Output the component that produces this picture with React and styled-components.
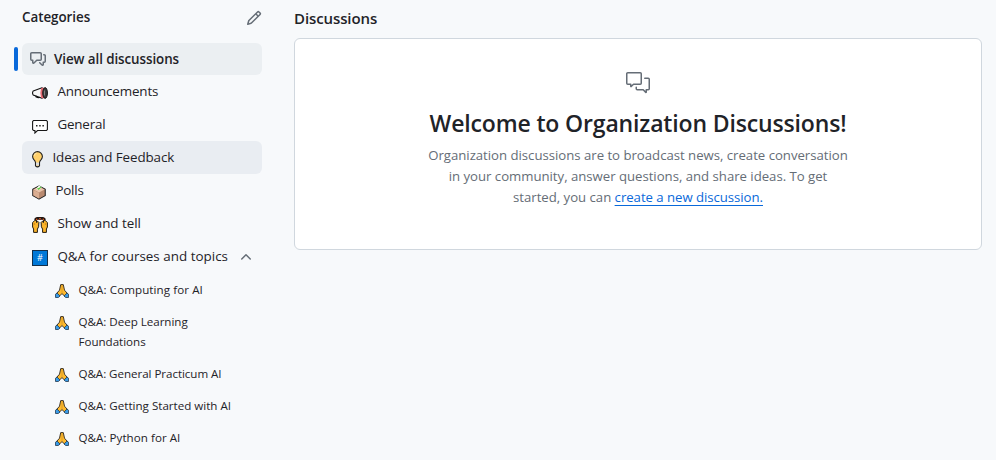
import React from "react";
import styled, { createGlobalStyle } from "styled-components";

const GlobalStyle = createGlobalStyle`
  * { box-sizing: border-box; }
  body {
    margin: 0;
    background: #f7f9fb;
    color: #1f2328;
    font-family: "Open Sans", sans-serif;
  }
  svg { display: block; flex: none; }
  h1, h2, h3, p, ul { margin: 0; padding: 0; }
`;

const Page = styled.div`
  display: grid;
  grid-template-columns: 240px 688px;
  column-gap: 32px;
  height: 460px;
  padding-left: 22px;
  overflow: hidden;
`;

const Sidebar = styled.nav`
  display: flex;
  flex-direction: column;
`;

const SidebarHeader = styled.header`
  display: flex;
  align-items: center;
  justify-content: space-between;
  height: 36px;
  margin-bottom: 7px;
  color: #656d76;
`;

const SidebarTitle = styled.h2`
  font-size: 13.4px;
  font-weight: 600;
  line-height: 20px;
  letter-spacing: -0.05px;
  color: #1f2328;
  margin-top: -2px;
`;

const List = styled.ul`
  list-style: none;
`;

const Category = styled.li`
  position: relative;
  display: flex;
  align-items: center;
  height: ${(p) => (p.$current ? 32 : 33)}px;
  padding-left: ${(p) => (p.$current ? 8 : 10)}px;
  border-radius: 6px;
  background: ${(p) => (p.$current ? "#ebeff2" : p.$hovered ? "#e9edf2" : "transparent")};
  color: #656d76;
`;

const CurrentMarker = styled.span`
  position: absolute;
  left: -8px;
  top: 4px;
  width: 4px;
  height: 24px;
  border-radius: 6px;
  background: #0969da;
`;

const CategoryName = styled.span`
  margin-left: ${(p) => (p.$strong ? 8 : 9.4)}px;
  padding-bottom: ${(p) => (p.$strong ? 0 : 2)}px;
  font-size: 13.4px;
  font-weight: ${(p) => (p.$strong ? 600 : 400)};
  line-height: 20px;
  letter-spacing: ${(p) => p.$tracking || 0}px;
  color: #1f2328;
  white-space: nowrap;
`;

const Emoji = styled.span`
  display: flex;
  padding-top: 3px;
`;

const ChevronSlot = styled.span`
  display: flex;
  margin-left: 10px;
`;

const SubList = styled(List)`
  padding: 0 50px 0 33px;
  margin-top: 1px;
`;

const SubCategory = styled.li`
  display: flex;
  align-items: flex-start;
  padding: 6px 0;
`;

const SubEmoji = styled.span`
  display: flex;
  padding-top: 4px;
`;

const SubName = styled.span`
  margin-left: 9.5px;
  width: 154px;
  font-size: 11.6px;
  line-height: 20px;
  letter-spacing: ${(p) => p.$tracking || 0}px;
`;

const Line = styled.span`
  display: block;
  white-space: nowrap;
`;

const Main = styled.main`
  display: flex;
  flex-direction: column;
`;

const MainTitle = styled.h1`
  height: 38px;
  padding-top: 6px;
  font-size: 15px;
  font-weight: 600;
  line-height: 24px;
  letter-spacing: -0.1px;
`;

const Blankslate = styled.section`
  display: flex;
  flex-direction: column;
  align-items: center;
  height: 212px;
  padding-top: 32px;
  border: 1px solid #d0d7de;
  border-radius: 6px;
  background: #fff;
  color: #656d76;
  text-align: center;
`;

const BlankslateTitle = styled.h2`
  margin-top: 10px;
  font-size: 23px;
  font-weight: 600;
  line-height: 36px;
  letter-spacing: -0.15px;
  color: #1f2328;
`;

const BlankslateText = styled.p`
  margin-top: 4px;
  font-size: 13.2px;
  line-height: 21px;
  letter-spacing: -0.02px;
`;

const Link = styled.a`
  color: #0969da;
  letter-spacing: -0.04px;
  text-decoration: underline;
  text-underline-offset: 3px;
  text-decoration-thickness: 1px;
  text-decoration-skip-ink: none;
`;

const DiscussionIcon = () => (
  <svg width="16" height="16" viewBox="0 0 16 16" fill="currentColor">
    <path d="M1.75 1h8.5c.966 0 1.75.784 1.75 1.75v5.5A1.75 1.75 0 0 1 10.25 10H7.061l-2.574 2.573A1.458 1.458 0 0 1 2 11.543V10h-.25A1.75 1.75 0 0 1 0 8.25v-5.5C0 1.784.784 1 1.75 1ZM1.5 2.75v5.5c0 .138.112.25.25.25h1a.75.75 0 0 1 .75.75v2.19l2.72-2.72a.749.749 0 0 1 .53-.22h3.5a.25.25 0 0 0 .25-.25v-5.5a.25.25 0 0 0-.25-.25h-8.5a.25.25 0 0 0-.25.25Zm13 2a.25.25 0 0 0-.25-.25h-.5a.75.75 0 0 1 0-1.5h.5c.966 0 1.75.784 1.75 1.75v5.5A1.75 1.75 0 0 1 14.25 12H14v1.543a1.458 1.458 0 0 1-2.487 1.03L9.22 12.28a.749.749 0 0 1 .326-1.275.749.749 0 0 1 .734.215l2.22 2.22v-2.19a.75.75 0 0 1 .75-.75h1a.25.25 0 0 0 .25-.25Z" />
  </svg>
);

const LargeDiscussionIcon = () => (
  <svg width="24" height="24" viewBox="0 0 24 24" fill="none" stroke="currentColor" strokeWidth="1.5" strokeLinejoin="round" strokeLinecap="round">
    <path d="M1.75 1.75h12.5a1 1 0 0 1 1 1v9.5a1 1 0 0 1-1 1H7.5l-2.3 2.3a.27.27 0 0 1-.45-.2V13.25h-3a1 1 0 0 1-1-1v-9.5a1 1 0 0 1 1-1Z" />
    <path d="M18.75 7.25h3.5a1 1 0 0 1 1 1v9.5a1 1 0 0 1-1 1h-2v2.4a.27.27 0 0 1-.45.2l-2.6-2.6H11.25a1 1 0 0 1-1-1v-1.5" />
  </svg>
);

const PencilIcon = () => (
  <svg width="16" height="16" viewBox="0 0 16 16" fill="currentColor">
    <path d="M11.013 1.427a1.75 1.75 0 0 1 2.474 0l1.086 1.086a1.75 1.75 0 0 1 0 2.474l-8.61 8.61c-.21.21-.47.364-.756.445l-3.251.93a.75.75 0 0 1-.927-.928l.929-3.25c.081-.286.235-.547.445-.758l8.61-8.61Zm.176 4.823L9.75 4.81l-6.286 6.287a.253.253 0 0 0-.064.108l-.558 1.953 1.953-.558a.253.253 0 0 0 .108-.064Zm1.238-3.763a.25.25 0 0 0-.354 0L10.811 3.75l1.439 1.44 1.263-1.263a.25.25 0 0 0 0-.354Z" />
  </svg>
);

const ChevronUpIcon = () => (
  <svg width="16" height="16" viewBox="0 0 16 16" fill="currentColor">
    <path d="M3.22 10.53a.749.749 0 0 1 0-1.06l4.25-4.25a.749.749 0 0 1 1.06 0l4.25 4.25a.749.749 0 1 1-1.06 1.06L8 6.811 4.28 10.53a.749.749 0 0 1-1.06 0Z" />
  </svg>
);

const Megaphone = () => (
  <svg width="16" height="16" viewBox="0 0 16 16">
    <path d="M1.2 6 10 2.7v10.6L1.2 10Q-.1 8 1.2 6Z" fill="#f7f7f7" stroke="#111" strokeWidth="1.1" />
    <path d="M4 10.8v1q2.3 1.5 4.2.5" fill="none" stroke="#111" strokeWidth="1.2" />
    <path d="M9 3.2 12 2.5v11L9 12.8Q7.6 8 9 3.2Z" fill="#e56a72" />
    <ellipse cx="13.1" cy="8" rx="2.3" ry="5.4" fill="#3b3b3b" stroke="#111" strokeWidth="1" />
    <path d="M12.4 5.5v5" stroke="#8a8a8a" strokeWidth="1" />
  </svg>
);

const SpeechBalloon = () => (
  <svg width="16" height="16" viewBox="0 0 16 16">
    <path d="M1.5 2.5h13l.9.9v8.2l-.9.9h-9L2.9 15v-2.5H1.5l-.9-.9V3.4Z" fill="#fff" stroke="#171717" strokeWidth="1.1" />
    <path d="M4 7h1.5v1.4H4Zm3.2 0h1.5v1.4H7.2Zm3.2 0h1.5v1.4h-1.5Z" fill="#222" />
  </svg>
);

const LightBulb = () => (
  <svg width="11" height="17" viewBox="0 0 11 17">
    <path d="M3.5 11.5Q3.3 10 1.7 8.4A5 5 0 0 1 .6 5.5a4.9 4.9 0 0 1 9.8 0 5 5 0 0 1-1.1 2.9Q7.7 10 7.5 11.5v3.3q-2 2-4 0Z" fill="#ffd06b" stroke="#222" strokeWidth="1.1" />
    <path d="M4 11.5h3v3H4Z" fill="#d8dadd" />
    <path d="M2.2 5a3.2 3.2 0 0 1 2.4-2.8" fill="none" stroke="#ffe2a0" strokeWidth="1.2" />
  </svg>
);

const BallotBox = () => (
  <svg width="14" height="16" viewBox="0 0 14.6 16">
    <path d="M7.3 1.8 13.8 5v6.8l-6.5 3.6-6.5-3.6V5Z" fill="#b98a70" stroke="#222" strokeWidth="1.1" strokeLinejoin="round" />
    <path d="M7.3 2.4 13.1 5.3 7.3 8.4 1.5 5.3Z" fill="#e8c3aa" />
    <path d="M7.3 8.7v6L1.4 11.5V5.8Z" fill="#dbae92" />
    <path d="m4.3 4.5 3-3.3L10.2 3 7 5.8Z" fill="#f5fff0" />
    <path d="m5.8 4 1.1 1 2.5-2.3" fill="none" stroke="#54c636" strokeWidth="1.2" />
  </svg>
);

const RaisingHands = () => (
  <svg width="16" height="16" viewBox="0 0 16 16">
    <path d="M3.2 3.2Q5 .6 8 1.5q3-.9 4.8 1.7" fill="none" stroke="#221511" strokeWidth="3" />
    <path d="M4 2.5h1.4M7.2 1.7h1.6M10.6 2.5H12" stroke="#d45825" strokeWidth="1.4" />
    <path d="M1.6 15.4V12L.6 10V5.7L3 3.2l1.5.3v2L6 4.4l.9.9-.3 4.5-1.2 2.3v3.3Z" fill="#fbb52c" stroke="#221b12" strokeWidth="1" strokeLinejoin="round" />
    <path d="M14.4 15.4V12l1-2V5.7L13 3.2l-1.5.3v2L10 4.4l-.9.9.3 4.5 1.2 2.3v3.3Z" fill="#fbb52c" stroke="#221b12" strokeWidth="1" strokeLinejoin="round" />
    <path d="M2.6 6v2M13.4 6v2" stroke="#d88e19" />
  </svg>
);

const HashTile = styled.span`
  display: grid;
  place-items: center;
  width: 16px;
  height: 16px;
  border: 1px solid #14304a;
  background: #0078d7;
  color: #fff;
  font-size: 9px;
  line-height: 14px;
`;

const FoldedHands = () => (
  <svg width="14" height="14" viewBox="0 0 14 14">
    <path d="M5.7.6h2.6L9.5 6.2l3.2 3.6-3 2.4L7 9.6l-2.7 2.6-3-2.4 3.2-3.6Z" fill="#fdb92e" stroke="#2a241c" strokeWidth=".9" strokeLinejoin="round" />
    <path d="M7 1.4v7.4" stroke="#c98a22" strokeWidth=".6" />
    <path d="m2 9 3 3-1.7 1.5H.5V10.2Zm10 0-3 3 1.7 1.5h2.8v-3.3Z" fill="#3a9be6" stroke="#243b50" strokeWidth=".8" strokeLinejoin="round" />
  </svg>
);

const categories = [
  { name: "Announcements", icon: <Megaphone />, tracking: -0.13 },
  { name: "General", icon: <SpeechBalloon />, tracking: -0.18 },
  { name: "Ideas and Feedback", icon: <LightBulb />, tracking: -0.08, hovered: true },
  { name: "Polls", icon: <BallotBox />, tracking: -0.2 },
  { name: "Show and tell", icon: <RaisingHands />, tracking: -0.02 },
  { name: "Q&A for courses and topics", icon: <HashTile>#</HashTile>, tracking: 0.02, open: true },
];

const subCategories = [
  { lines: ["Q&A: Computing for AI"], tracking: 0.08 },
  { lines: ["Q&A: Deep Learning", "Foundations"], tracking: -0.02 },
  { lines: ["Q&A: General Practicum AI"], tracking: -0.05 },
  { lines: ["Q&A: Getting Started with AI"], tracking: 0 },
  { lines: ["Q&A: Python for AI"], tracking: 0.04 },
];

export default function App() {
  return (
    <>
      <GlobalStyle />
      <Page>
        <Sidebar>
          <SidebarHeader>
            <SidebarTitle>Categories</SidebarTitle>
            <PencilIcon />
          </SidebarHeader>
          <List>
            <Category $current>
              <CurrentMarker />
              <DiscussionIcon />
              <CategoryName $strong $tracking={-0.08}>View all discussions</CategoryName>
            </Category>
            {categories.map((c) => (
              <Category key={c.name} $hovered={c.hovered}>
                <Emoji>{c.icon}</Emoji>
                <CategoryName $tracking={c.tracking}>{c.name}</CategoryName>
                {c.open && <ChevronSlot><ChevronUpIcon /></ChevronSlot>}
              </Category>
            ))}
          </List>
          <SubList>
            {subCategories.map((s) => (
              <SubCategory key={s.lines[0]}>
                <SubEmoji><FoldedHands /></SubEmoji>
                <SubName $tracking={s.tracking}>
                  {s.lines.map((line) => <Line key={line}>{line}</Line>)}
                </SubName>
              </SubCategory>
            ))}
          </SubList>
        </Sidebar>
        <Main>
          <MainTitle>Discussions</MainTitle>
          <Blankslate>
            <LargeDiscussionIcon />
            <BlankslateTitle>Welcome to Organization Discussions!</BlankslateTitle>
            <BlankslateText>
              Organization discussions are to broadcast news, create conversation<br />
              in your community, answer questions, and share ideas. To get<br />
              started, you can <Link>create a new discussion.</Link>
            </BlankslateText>
          </Blankslate>
        </Main>
      </Page>
    </>
  );
}
